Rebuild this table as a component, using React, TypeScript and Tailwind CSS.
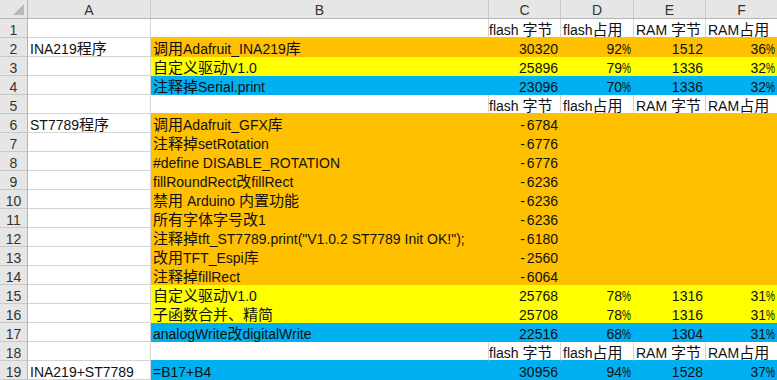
import React from "react";

type Fill = "o" | "y" | "b" | null;
type Row = {
  a?: string;
  b?: string;
  fill: Fill;
  hdr?: boolean;
  c?: string;
  d?: string;
  e?: string;
  f?: string;
};

const rows: Row[] = [
  { fill: null, hdr: true },
  { a: "INA219程序", b: "调用Adafruit_INA219库", fill: "o", c: "30320", d: "92", e: "1512", f: "36" },
  { b: "自定义驱动V1.0", fill: "y", c: "25896", d: "79", e: "1336", f: "32" },
  { b: "注释掉Serial.print", fill: "b", c: "23096", d: "70", e: "1336", f: "32" },
  { fill: null, hdr: true },
  { a: "ST7789程序", b: "调用Adafruit_GFX库", fill: "o", c: "-6784" },
  { b: "注释掉setRotation", fill: "o", c: "-6776" },
  { b: "#define DISABLE_ROTATION", fill: "o", c: "-6776" },
  { b: "fillRoundRect改fillRect", fill: "o", c: "-6236" },
  { b: "禁用 Arduino 内置功能", fill: "o", c: "-6236" },
  { b: "所有字体字号改1", fill: "o", c: "-6236" },
  { b: '注释掉tft_ST7789.print("V1.0.2 ST7789 Init OK!");', fill: "o", c: "-6180" },
  { b: "改用TFT_Espi库", fill: "o", c: "-2560" },
  { b: "注释掉fillRect", fill: "o", c: "-6064" },
  { b: "自定义驱动V1.0", fill: "y", c: "25768", d: "78", e: "1316", f: "31" },
  { b: "子函数合并、精简", fill: "y", c: "25708", d: "78", e: "1316", f: "31" },
  { b: "analogWrite改digitalWrite", fill: "b", c: "22516", d: "68", e: "1304", f: "31" },
  { fill: null, hdr: true },
  { a: "INA219+ST7789", b: "=B17+B4", fill: "b", c: "30956", d: "94", e: "1528", f: "37" },
];

const fillCls: Record<string, string> = {
  o: "bg-[#ffc000] border-[#ffc000]",
  y: "bg-[#ffff00] border-[#ffff00]",
  b: "bg-[#00b0f0] border-[#00b0f0]",
};
const bottomCls: Record<string, string> = {
  o: "border-b-[#ffc000]",
  y: "border-b-[#ffff00]",
  b: "border-b-[#00b0f0]",
};

const hdrTexts = ["flash 字节", "flash占用", "RAM 字节", "RAM占用"];
const hdrPad = ["pl-0", "pl-[2px]", "pl-[2px]", "pl-[2px]"];

const CJK = /([\u3000-\u9fff\uff00-\uffef]+)/;

function T({ s }: { s?: string }) {
  if (!s) return null;
  const parts = s.split(CJK);
  return (
    <span className="relative z-10">
      {parts.map((p, i) =>
        p === "" ? null : /[\u3000-\u9fff\uff00-\uffef]/.test(p) ? (
          <span key={i} className="text-[15px]">
            {p}
          </span>
        ) : (
          <React.Fragment key={i}>{p}</React.Fragment>
        )
      )}
    </span>
  );
}

function Num({ v }: { v?: string }) {
  if (!v) return null;
  if (v.startsWith("-")) {
    return (
      <span>
        <span className="mr-[2px]">-</span>
        {v.slice(1)}
      </span>
    );
  }
  return <span>{v}</span>;
}

function Pct({ v }: { v?: string }) {
  if (!v) return null;
  return (
    <span>
      {v}
      <span className="inline-block w-[9px] origin-left scale-x-[0.72]">%</span>
    </span>
  );
}

export default function App() {
  return (
    <div
      className="w-[777px] h-[380px] overflow-hidden bg-white text-[14px] text-[#111]"
      style={{ fontFamily: '"Liberation Sans", "Noto Sans CJK SC", sans-serif' }}
    >
      <div className="grid grid-cols-[28px_123px_338px_72px_73px_72px_72px] auto-rows-[19px]">
        {/* header row */}
        <div className="relative bg-[#e6e6e6] border-r border-b border-[#b4b4b4]">
          <svg className="absolute left-0 top-0" width="27" height="18" viewBox="0 0 27 18">
            <polygon points="24,4 24,15 13,15" fill="#b8b8b8" />
          </svg>
        </div>
        {["A", "B", "C", "D", "E", "F"].map((l) => (
          <div
            key={l}
            className="bg-[#e6e6e6] border-r border-r-[#c8c8c8] border-b border-b-[#b4b4b4] flex items-end justify-center leading-[16px] text-[#333]"
          >
            {l}
          </div>
        ))}
        {rows.map((r, i) => {
          const next = rows[i + 1];
          const nextFill = next ? next.fill : null;
          const whiteBottom = nextFill ? bottomCls[nextFill] : "border-b-[#d4d4d4]";
          const cellBase = "box-border flex items-end whitespace-nowrap leading-[14px]";
          const rest = [r.c, r.d, r.e, r.f];
          return (
            <React.Fragment key={i}>
              <div className="bg-[#e6e6e6] border-r border-b border-r-[#b4b4b4] border-b-[#c8c8c8] flex items-end justify-center leading-[14px] text-[#333]">
                {i + 1}
              </div>
              <div className={`${cellBase} border-r border-b border-[#d4d4d4] pl-[2px]`}>
                <T s={r.a} />
              </div>
              {r.fill ? (
                <>
                  <div className={`${cellBase} border-r border-b ${fillCls[r.fill]} pl-[2px]`}>
                    <T s={r.b} />
                  </div>
                  {rest.map((v, k) => (
                    <div
                      key={k}
                      className={`${cellBase} border-r border-b ${fillCls[r.fill as string]} justify-end pr-[2px]`}
                    >
                      {k === 1 || k === 3 ? <Pct v={v} /> : <Num v={v} />}
                    </div>
                  ))}
                </>
              ) : (
                <>
                  <div className={`${cellBase} border-r border-b border-r-[#d4d4d4] ${whiteBottom}`}>
                    <T s={r.b} />
                  </div>
                  {hdrTexts.map((t, k) => (
                    <div
                      key={k}
                      className={`${cellBase} border-r border-b border-r-[#d4d4d4] ${whiteBottom} ${hdrPad[k]}`}
                    >
                      {r.hdr ? <T s={t} /> : null}
                    </div>
                  ))}
                </>
              )}
            </React.Fragment>
          );
        })}
      </div>
    </div>
  );
}
